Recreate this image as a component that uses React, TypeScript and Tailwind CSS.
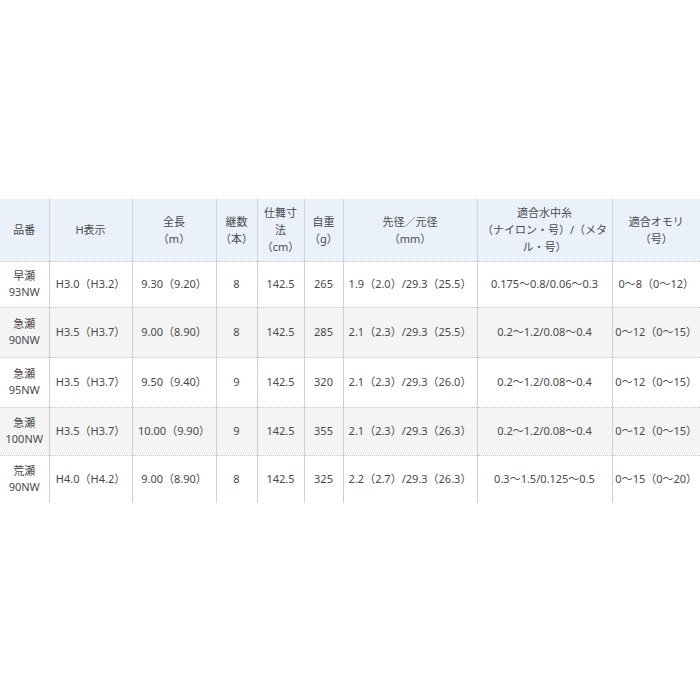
const HEAD = [
  { w: 'w-[49px]', lines: ['品番'] },
  { w: 'w-[83px]', lines: ['H表示'] },
  { w: 'w-[84px]', lines: ['全長', '（m）'] },
  { w: 'w-[41px]', lines: ['継数', '（本）'] },
  { w: 'w-[47px]', lines: ['仕舞寸', '法', '（cm）'] },
  { w: 'w-[39px]', lines: ['自重', '（g）'] },
  { w: 'w-[134px]', lines: ['先径／元径', '（mm）'] },
  { w: 'w-[135px]', lines: ['適合水中糸', '（ナイロン・号）/（メタ', 'ル・号）'] },
  { w: 'w-[88px]', lines: ['適合オモリ', '（号）'] },
];

const ROWS = [
  { h: 'h-[46px]', cells: [['早瀬', '93NW'], 'H3.0（H3.2）', '9.30（9.20）', '8', '142.5', '265', '1.9（2.0）/29.3（25.5）', '0.175～0.8/0.06～0.3', '0～8（0～12）'] },
  { h: 'h-[50px]', cells: [['急瀬', '90NW'], 'H3.5（H3.7）', '9.00（8.90）', '8', '142.5', '285', '2.1（2.3）/29.3（25.5）', '0.2～1.2/0.08～0.4', '0～12（0～15）'] },
  { h: 'h-[50px]', cells: [['急瀬', '95NW'], 'H3.5（H3.7）', '9.50（9.40）', '9', '142.5', '320', '2.1（2.3）/29.3（26.0）', '0.2～1.2/0.08～0.4', '0～12（0～15）'] },
  { h: 'h-[48px]', cells: [['急瀬', '100NW'], 'H3.5（H3.7）', '10.00（9.90）', '9', '142.5', '355', '2.1（2.3）/29.3（26.3）', '0.2～1.2/0.08～0.4', '0～12（0～15）'] },
  { h: 'h-[48px]', cells: [['荒瀬', '90NW'], 'H4.0（H4.2）', '9.00（8.90）', '8', '142.5', '325', '2.2（2.7）/29.3（26.3）', '0.3～1.5/0.125～0.5', '0～15（0～20）'] },
];

export default function App() {
  return (
    <div className="w-[700px] h-[700px] bg-white pt-[199px] text-[#4a4a4a] text-[11px] leading-[16px] font-['Noto_Sans','Noto_Sans_CJK_JP',sans-serif]">
      <table className="w-[700px] table-fixed border-collapse">
        <thead>
          <tr className="h-[62px] bg-[#eaf1fb] border-b border-dotted border-[#c8c8c8]">
            {HEAD.map((col, i) => (
              <th
                key={i}
                className={`${col.w} p-0 font-normal text-center align-middle leading-[17px] whitespace-nowrap border-l border-[#cfd3d8] first:border-l-0`}
              >
                {col.lines.map((l, j) => (
                  <div key={j}>{l}</div>
                ))}
              </th>
            ))}
          </tr>
        </thead>
        <tbody>
          {ROWS.map((row, r) => (
            <tr
              key={r}
              className={`${row.h} ${r % 2 === 1 ? 'bg-[#f4f4f4]' : 'bg-white'} border-b border-dotted border-[#c8c8c8] last:border-b-0`}
            >
              {row.cells.map((c, i) => (
                <td key={i} className="p-0 text-center align-middle whitespace-nowrap border-l border-[#cfcfcf] first:border-l-0">
                  {Array.isArray(c) ? c.map((l, j) => <div key={j}>{l}</div>) : c}
                </td>
              ))}
            </tr>
          ))}
        </tbody>
      </table>
    </div>
  );
}
